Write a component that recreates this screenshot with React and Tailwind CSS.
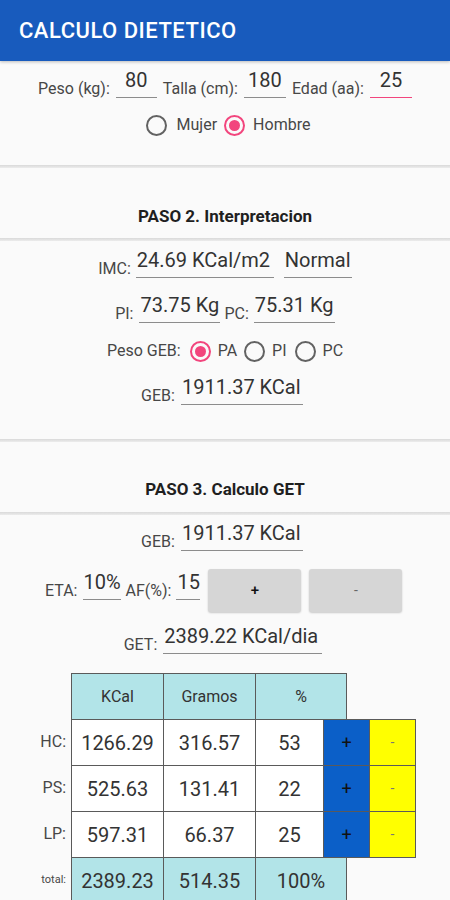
import React from 'react';

const Label = ({ children, className = '' }) => (
  <span className={'text-[16px] leading-[18px] text-[#474747] whitespace-nowrap ' + className}>{children}</span>
);

const Field = ({ children, className = '' }) => (
  <div className={'border-b-[1.5px] pb-[5px] text-[20px] leading-[24px] text-[#333] whitespace-nowrap ' + className}>
    {children}
  </div>
);

const Radio = ({ checked }) =>
  checked ? (
    <span className="w-[21px] h-[21px] rounded-full border-2 border-[#f2457d] flex items-center justify-center shrink-0">
      <span className="w-[11px] h-[11px] rounded-full bg-[#f2457d]" />
    </span>
  ) : (
    <span className="block w-[21px] h-[21px] rounded-full border-2 border-[#626262] shrink-0" />
  );

const Divider = () => <div className="h-[3px] bg-gradient-to-b from-[#d9d9d9] to-[#ececec]" />;

const Cell = ({ children, className = '' }) => (
  <div className={'border border-[#5a5a5a] -mr-px -mb-px flex items-center justify-center ' + className}>{children}</div>
);

const rows = [
  ['HC:', '1266.29', '316.57', '53'],
  ['PS:', '525.63', '131.41', '22'],
  ['LP:', '597.31', '66.37', '25'],
];

export default function App() {
  return (
    <div className="min-h-screen bg-[#fafafa] font-[Roboto,sans-serif]">
      {/* Header */}
      <div className="h-[61px] bg-[#185bbd] flex items-center pl-[19px] shadow-[0_1px_3px_rgba(0,0,0,0.25)]">
        <h1 className="text-[22px] font-medium text-white tracking-[0.5px]">CALCULO DIETETICO</h1>
      </div>

      {/* Paso 1 */}
      <div className="pt-[7px]">
        <div className="flex items-end justify-center gap-[6px]">
          <Label>Peso (kg):</Label>
          <Field className="w-[41px] text-center border-[#8c8c8c]">80</Field>
          <Label>Talla (cm):</Label>
          <Field className="w-[42px] text-center border-[#8c8c8c]">180</Field>
          <Label>Edad (aa):</Label>
          <Field className="w-[42px] text-center border-[#f2457d] border-b-2">25</Field>
        </div>
        <div className="mt-[15px] h-[24px] flex items-center justify-center pl-[6px]">
          <Radio />
          <span className="ml-[10px] text-[16px] text-[#474747]">Mujer</span>
          <span className="ml-[7px]"><Radio checked /></span>
          <span className="ml-[8px] text-[16px] text-[#474747]">Hombre</span>
        </div>
        <div className="mt-[28px]"><Divider /></div>
      </div>

      {/* Paso 2 */}
      <div className="h-[70px] flex items-end justify-center pb-[13px]">
        <h2 className="text-[17px] leading-[18px] font-bold text-[#1f1f1f]">PASO 2. Interpretacion</h2>
      </div>
      <Divider />
      <div className="mt-[7px] flex items-end justify-center">
        <Label>IMC:</Label>
        <Field className="ml-[5px] w-[138px] pl-[1px] border-[#8c8c8c]">24.69 KCal/m2</Field>
        <Field className="ml-[10px] w-[68px] pl-[1px] border-[#8c8c8c]">Normal</Field>
      </div>
      <div className="mt-[15px] flex items-end justify-center">
        <Label>PI:</Label>
        <Field className="ml-[6px] w-[81px] pl-[1px] border-[#8c8c8c]">73.75 Kg</Field>
        <Label className="ml-[4px]">PC:</Label>
        <Field className="ml-[5px] w-[81px] pl-[1px] border-[#8c8c8c]">75.31 Kg</Field>
      </div>
      <div className="mt-[16px] h-[24px] flex items-center justify-center">
        <Label>Peso GEB:</Label>
        <span className="ml-[9px]"><Radio checked /></span>
        <span className="ml-[7px] text-[16px] text-[#474747]">PA</span>
        <span className="ml-[7px]"><Radio /></span>
        <span className="ml-[7px] text-[16px] text-[#474747]">PI</span>
        <span className="ml-[8px]"><Radio /></span>
        <span className="ml-[7px] text-[16px] text-[#474747]">PC</span>
      </div>
      <div className="mt-[12px] flex items-end justify-center pr-[6px]">
        <Label>GEB:</Label>
        <Field className="ml-[6px] w-[122px] pl-[1px] border-[#8c8c8c]">1911.37 KCal</Field>
      </div>
      <div className="mt-[34px]"><Divider /></div>

      {/* Paso 3 */}
      <div className="h-[70px] flex items-end justify-center pb-[14px]">
        <h2 className="text-[17px] leading-[18px] font-bold text-[#1f1f1f]">PASO 3. Calculo GET</h2>
      </div>
      <Divider />
      <div className="mt-[6px] flex items-end justify-center pr-[6px]">
        <Label>GEB:</Label>
        <Field className="ml-[6px] w-[122px] pl-[1px] border-[#8c8c8c]">1911.37 KCal</Field>
      </div>
      <div className="mt-[18px] flex items-end pl-[45px]">
        <div className="flex items-end mb-[12px]">
          <Label>ETA:</Label>
          <Field className="ml-[5px] w-[38px] pl-[1px] border-[#8c8c8c]">10%</Field>
          <Label className="ml-[5px]">AF(%):</Label>
          <Field className="ml-[5px] w-[24px] pl-[1px] border-[#8c8c8c]">15</Field>
        </div>
        <button className="ml-[8px] w-[93px] h-[43px] rounded-[3px] bg-[#d6d6d6] shadow-[0_1px_2px_rgba(0,0,0,0.2)] text-[15px] font-medium text-[#111]">+</button>
        <button className="ml-[8px] w-[93px] h-[43px] rounded-[3px] bg-[#d6d6d6] shadow-[0_1px_2px_rgba(0,0,0,0.2)] text-[14px] text-[#666]">-</button>
      </div>
      <div className="mt-[12px] flex items-end justify-center pr-[4px]">
        <Label>GET:</Label>
        <Field className="ml-[6px] w-[159px] pl-[1px] border-[#8c8c8c]">2389.22 KCal/dia</Field>
      </div>

      {/* Tabla */}
      <div className="mt-[19px] grid grid-cols-[71px_92px_92px_68px_23px_23px_46px] auto-rows-[46px] text-[#333]">
        <div />
        <Cell className="bg-[#b2e4e8] text-[16px]">KCal</Cell>
        <Cell className="bg-[#b2e4e8] text-[16px]">Gramos</Cell>
        <Cell className="col-span-2 bg-[#b2e4e8] text-[16px]">%</Cell>
        <div />
        <div />
        {rows.map(([l, k, g, p]) => (
          <React.Fragment key={l}>
            <div className="flex items-center justify-end pr-[5px] text-[16px] text-[#474747]">{l}</div>
            <Cell className="bg-white text-[20px]">{k}</Cell>
            <Cell className="bg-white text-[20px]">{g}</Cell>
            <Cell className="bg-white text-[20px]">{p}</Cell>
            <Cell className="col-span-2 bg-[#0b5fc8] text-[18px] text-[#111]">+</Cell>
            <Cell className="bg-[#ffff00] text-[14px] text-[#777]">-</Cell>
          </React.Fragment>
        ))}
        <div className="flex items-center justify-end pr-[5px] text-[11px] text-[#474747]">total:</div>
        <Cell className="bg-[#b2e4e8] text-[20px]">2389.23</Cell>
        <Cell className="bg-[#b2e4e8] text-[20px]">514.35</Cell>
        <Cell className="col-span-2 bg-[#b2e4e8] text-[20px]">100%</Cell>
      </div>
    </div>
  );
}
